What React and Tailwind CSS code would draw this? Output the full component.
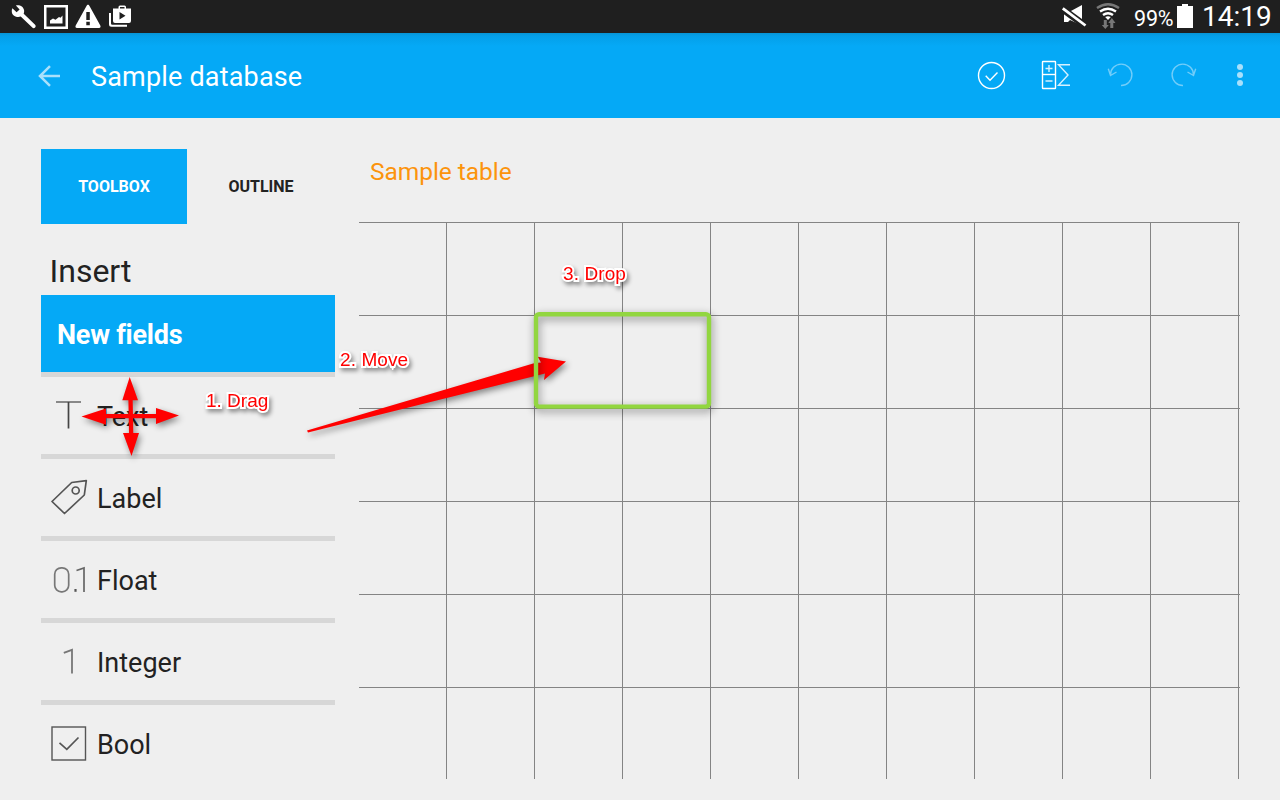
import React from "react";

function StatusBar() {
  return (
    <div className="flex h-[33px] shrink-0 items-center justify-between bg-[#1f1f1f] text-white">
      <svg width="140" height="33" viewBox="0 0 140 33" fill="#fff">
        <path d="M12.4 8.2l4.2 4 3-2.6-3.7-4.2c3.600-1 7.600 1 8.200 4.800.2 1.300 0 2.500-.4 3.500l11.400 11c.8.9.8 1.900 0 2.800-.9.9-2 .9-2.800 0L20.700 16.600c-3.600 1.300-8.400-.6-8.900-4.700-.2-1.300 0-2.600.6-3.700z" />
        <path fillRule="evenodd" d="M44 5h24v24H44zM46.500 7.500v19h19v-19z" />
        <path d="M50 23.500v-3l3-2 2.500 1.300 3.500-2.800 1.500.8 2-2.300v8z" />
        <path fillRule="evenodd" d="M88 4.800c.7 0 1.100.5 1.500 1.200l10.800 19.500c.6 1.300.2 2.500-1.300 2.500H77c-1.500 0-1.900-1.200-1.300-2.500L86.500 6c.4-.7.8-1.200 1.500-1.200zM86.300 12v8h3.500v-8zM86.300 21.800v3.400h3.500v-3.400z" />
        <path fillRule="evenodd" d="M113 8.500h5.500V7q0-1.500 1.500-1.500h4.500q1.500 0 1.500 1.500v1.500h5V21q0 2-2 2h-14q-2 0-2-2zM120 7v1.500h4.500V7zM119.500 12v7.500l6-3.700z" />
        <path d="M109 13h2v10.500q0 1.200 1.200 1.200H127v2h-15.500q-2.500 0-2.500-2.500z" />
      </svg>
      <div className="flex h-full items-center">
        <svg width="72" height="33" viewBox="1060 0 72 33" fill="#fff">
          <path d="M1064 11.500h6l12-6.500v20.500l-12-5.500-2 2h-4z" />
          <path d="M1062.500 9l22.500 16.500" stroke="#1f1f1f" strokeWidth="7" />
          <path d="M1062.800 8.300l22.700 17.200" stroke="#fff" strokeWidth="2.800" />
          <g fill="none" strokeWidth="2.400">
            <path d="M1097 8q11-7.500 22 0" stroke="#777" />
            <path d="M1100 11.500q8-5.500 16 0M1103 15q5-3.700 10 0" stroke="#fff" />
          </g>
          <path d="M1105.200 17q2.800-1.500 5.600 0l-2.800 3z" />
          <path fill="#777" d="M1103.800 20h3v5h2l-3.500 4-3.500-4h2zM1110.300 28h3v-5h2.200l-3.700-5-3.500 5h2z" />
        </svg>
        <span className="ml-[2px] w-[40px] whitespace-nowrap pt-[3px] text-[21.5px] leading-[33px] tracking-[-0.2px]">99%</span>
        <svg className="ml-[3px]" width="16" height="33" viewBox="0 0 16 33" fill="#fff">
          <path d="M0 6h5V4h6v2h5v22H0z" />
        </svg>
        <span className="ml-[9px] w-[78px] whitespace-nowrap text-[28px] leading-[33px] tracking-[0px]">14:19</span>
      </div>
    </div>
  );
}

function AppBar() {
  return (
    <div className="flex h-[85px] shrink-0 items-center justify-between bg-[#05a9f6] bg-[linear-gradient(#0794d5_0px,#049fe8_3px,#05a9f6_13px)] text-white">
      <div className="flex h-full items-center">
        <svg className="ml-[36px]" width="26" height="85" viewBox="36 33 26 85" fill="none" stroke="#a9e0fb" strokeWidth="2.500">
          <path d="M60 76H40M50 66.200L40 76l10 9.800" />
        </svg>
        <span className="ml-[29px] pt-1 text-[27px] leading-[81px] tracking-[0.18px]">Sample database</span>
      </div>
      <svg width="310" height="85" viewBox="970 33 310 85" fill="none" stroke="#fff" strokeWidth="1.400">
        <circle cx="991.500" cy="75.500" r="13" />
        <path d="M985.700 75.800l4.300 4.400 7.500-7.700" />
        <g stroke="#d5f1ff">
          <rect x="1042.500" y="61.500" width="13" height="27" rx="0.500" stroke="#fff" />
          <path d="M1042.500 74.500h13" stroke="#fff" />
          <path d="M1045.500 68.500h7M1049 65v7M1045.500 81h7" />
          <path d="M1070 64.700h-11.500l9.500 10.300-9.500 10.300h11.500" />
        </g>
        <g stroke="#72cdf9">
          <path d="M1110.500 75a10.700 10.700 0 1 1 10.500 10.500M1108.300 68.800l2.200 6.700 6-3.500" />
          <path d="M1193.500 75a10.700 10.700 0 1 0-10.500 10.500M1195.700 68.800l-2.200 6.700-6-3.500" />
        </g>
        <g fill="#a9e0fb" stroke="none">
          <circle cx="1240" cy="67" r="3" />
          <circle cx="1240" cy="75" r="3" />
          <circle cx="1240" cy="83" r="3" />
        </g>
      </svg>
    </div>
  );
}

const fields = [
  {
    name: "Text",
    icon: (
      <>
        <path d="M15 25h25" stroke="#888" strokeWidth="2" />
        <path d="M27.500 25v26.500" stroke="#444" />
      </>
    ),
  },
  {
    name: "Label",
    icon: (
      <>
        <path d="M30.700 23.500L45.300 21.700l-2 14.300L23.500 54.500 11 42.500z" strokeLinejoin="round" />
        <circle cx="34.700" cy="31.500" r="3.500" />
      </>
    ),
  },
  {
    name: "Float",
    icon: (
      <>
        <rect x="13.700" y="26.800" width="14" height="24" rx="6.500" stroke="#777" />
        <path d="M34.500 48v2.800" strokeWidth="2.200" />
        <path d="M35.500 29.500l7.500-2.500v24" stroke="#666" />
      </>
    ),
  },
  { name: "Integer", icon: <path d="M22.800 29.800l8.200-3v23.700" stroke="#777" strokeWidth="1.800" /> },
  {
    name: "Bool",
    icon: (
      <>
        <rect x="11" y="22" width="33.500" height="33" strokeWidth="1.400" />
        <path d="M18.500 37.800l7.300 6.500L37.500 32.500" />
      </>
    ),
  },
];

function Toolbox() {
  return (
    <aside className="flex w-[294px] shrink-0 flex-col">
      <div className="mt-[31px] flex h-[75px] text-[16px] font-bold leading-[75px]">
        <div className="w-[146px] bg-[#05a9f6] text-center text-white">TOOLBOX</div>
        <div className="w-[148px] text-center text-[#222]">OUTLINE</div>
      </div>
      <h2 className="h-[71px] pl-[8.5px] pt-[24px] text-[32px] leading-[46px]">Insert</h2>
      <div className="h-[82px] shrink-0 border-b-[5px] border-[#d7d7d7] bg-[#05a9f6] pl-4 text-[27px] font-bold leading-[80px] tracking-[-0.25px] text-white">
        New fields
      </div>
      {fields.map((f) => (
        <div key={f.name} className="flex h-[82px] shrink-0 border-b-[5px] border-[#d7d7d7] last:border-0">
          <svg className="shrink-0" width="56" height="77" viewBox="0 0 56 77" fill="none" stroke="#555" strokeWidth="1.700">
            {f.icon}
          </svg>
          <span className="text-[27px] leading-[81px]">{f.name}</span>
        </div>
      ))}
    </aside>
  );
}

function Board() {
  return (
    <main className="flex w-[881px] flex-col">
      <div className="h-[104px] pl-[11px] pt-[34px] text-[24.5px] leading-[40px] tracking-[-0.05px] text-[#fc940c]">Sample table</div>
      {[0, 1, 2, 3, 4, 5].map((r) => (
        <div key={r} className="flex h-[93px] shrink-0 border-t border-[#848484] last:h-[92px]">
          {Array.from({ length: 10 }, (_, c) => (
            <div key={c} className="w-[88px] shrink-0 border-r border-[#848484]" />
          ))}
        </div>
      ))}
    </main>
  );
}

const note =
  "absolute whitespace-nowrap font-['Liberation_Sans',sans-serif] text-[19px] leading-[22px] text-[#f00] [-webkit-text-stroke:4px_#fff] [paint-order:stroke_fill] [stroke-linejoin:round] drop-shadow-[2px_3px_2px_rgba(0,0,0,0.4)]";

function Annotations() {
  return (
    <>
      <svg className="absolute inset-0" width="1280" height="800" viewBox="0 0 1280 800">
        <g fill="#f00" className="drop-shadow-[2px_3px_3px_rgba(0,0,0,0.45)]">
          <path d="M129.700 377L138 400.300H132.700L133.300 433H139L131.500 456L123 433H129L128.400 400.300H122.300Z" />
          <path d="M81.500 416.500L106 408.500V414H156V408L179 415.500L156 424V418.200H106V424.800Z" />
          <path d="M307 430.500L534 363.200L541 362.500L537.700 356.700L566 361.500L544 380L545 373.500L308 432.400Z" />
        </g>
        <rect
          x="536" y="314.300" width="173" height="92.300" rx="3"
          fill="none" stroke="#92d640" strokeWidth="4.400"
          className="drop-shadow-[1px_3px_4px_rgba(0,0,0,0.45)]"
        />
      </svg>
      <span className={`${note} left-[206px] top-[390px]`}>1. Drag</span>
      <span className={`${note} left-[340px] top-[349px] tracking-[0.1px]`}>2. Move</span>
      <span className={`${note} left-[563px] top-[263px] tracking-[0.1px]`}>3. Drop</span>
    </>
  );
}

export default function App() {
  return (
    <div className="relative flex h-[800px] w-[1280px] flex-col overflow-hidden bg-[#efefef] font-[Roboto,sans-serif] text-[#222]">
      <StatusBar />
      <AppBar />
      <div className="flex min-h-0 flex-1 gap-6 pl-[41px]">
        <Toolbox />
        <Board />
      </div>
      <Annotations />
    </div>
  );
}
